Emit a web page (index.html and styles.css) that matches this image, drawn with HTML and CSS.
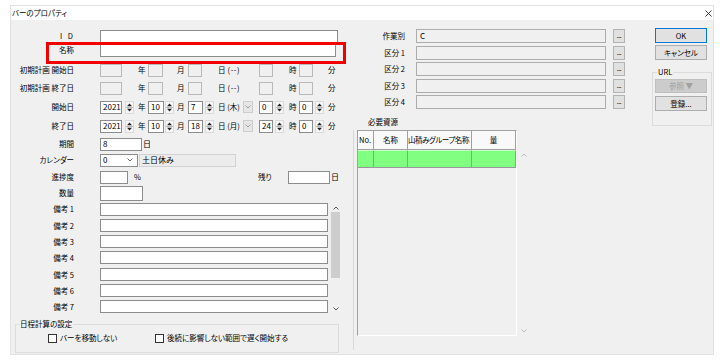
FILE: index.html
```html
<!DOCTYPE html>
<html lang="ja">
<head>
<meta charset="utf-8">
<title>バーのプロパティ</title>
<link rel="stylesheet" href="styles.css">
</head>
<body>
<div class="window">
  <div class="titlebar">
    <span class="title">バーのプロパティ</span>
    <svg class="close" width="7" height="7" viewBox="0 0 7 7"><path d="M0.5 0.5L6.5 6.5M6.5 0.5L0.5 6.5" stroke="#222" stroke-width="0.9"/></svg>
  </div>
  <div class="body">
    <div class="left">
      <div class="row"><span class="lbl idl">I D</span><span class="tb w238"></span></div>
      <div class="row hl"><span class="lbl">名称</span><span class="tb w236"></span></div>

      <div class="row g6"><span class="lbl">初期計画 開始日</span>
        <div class="dg">
          <span class="c c1"><span class="tb dis w22"></span></span>
          <span class="u u13 p3">年</span>
          <span class="c c3"><span class="tb dis w15"></span></span>
          <span class="u u13 p2">月</span>
          <span class="c c5"><span class="tb dis w14"></span></span>
          <span class="c c6">日 <span class="dash">(--)</span></span>
          <span class="c c7"><span class="tb dis w14"></span></span>
          <span class="u u12 p2">時</span>
          <span class="c c9"><span class="tb dis w14"></span></span>
          <span class="u p2">分</span>
        </div>
      </div>
      <div class="row g4"><span class="lbl">初期計画 終了日</span>
        <div class="dg">
          <span class="c c1"><span class="tb dis w22"></span></span>
          <span class="u u13 p3">年</span>
          <span class="c c3"><span class="tb dis w15"></span></span>
          <span class="u u13 p2">月</span>
          <span class="c c5"><span class="tb dis w14"></span></span>
          <span class="c c6">日 <span class="dash">(--)</span></span>
          <span class="c c7"><span class="tb dis w14"></span></span>
          <span class="u u12 p2">時</span>
          <span class="c c9"><span class="tb dis w14"></span></span>
          <span class="u p2">分</span>
        </div>
      </div>

      <div class="row g5"><span class="lbl">開始日</span>
        <div class="dg">
          <span class="c c1"><span class="tb w22">2021</span><svg class="spin ml3" width="9" height="13" viewBox="0 0 9 13"><path d="M2 5.2H7L4.5 2.4Z M2 7.8H7L4.5 10.6Z" fill="#222"/><path d="M1 6.5H8" stroke="#aaa" stroke-width="0.8"/></svg></span>
          <span class="u u13 p3">年</span>
          <span class="c c3"><span class="tb w16">10</span><svg class="spin ml1" width="9" height="13" viewBox="0 0 9 13"><path d="M2 5.2H7L4.5 2.4Z M2 7.8H7L4.5 10.6Z" fill="#222"/><path d="M1 6.5H8" stroke="#aaa" stroke-width="0.8"/></svg></span>
          <span class="u u13 p2">月</span>
          <span class="c c5"><span class="tb w15">7</span><svg class="spin ml2" width="9" height="13" viewBox="0 0 9 13"><path d="M2 5.2H7L4.5 2.4Z M2 7.8H7L4.5 10.6Z" fill="#222"/><path d="M1 6.5H8" stroke="#aaa" stroke-width="0.8"/></svg></span>
          <span class="c c6">日 (木)<span class="dd"><svg width="6" height="4" viewBox="0 0 6 4"><path d="M0.5 0.5L3 3L5.5 0.5" fill="none" stroke="#9a9a9a" stroke-width="0.9"/></svg></span></span>
          <span class="c c7"><span class="tb w14">0</span><svg class="spin ml2" width="9" height="13" viewBox="0 0 9 13"><path d="M2 5.2H7L4.5 2.4Z M2 7.8H7L4.5 10.6Z" fill="#222"/><path d="M1 6.5H8" stroke="#aaa" stroke-width="0.8"/></svg></span>
          <span class="u u12 p2">時</span>
          <span class="c c9"><span class="tb w14">0</span><svg class="spin ml2" width="9" height="13" viewBox="0 0 9 13"><path d="M2 5.2H7L4.5 2.4Z M2 7.8H7L4.5 10.6Z" fill="#222"/><path d="M1 6.5H8" stroke="#aaa" stroke-width="0.8"/></svg></span>
          <span class="u p2">分</span>
        </div>
      </div>
      <div class="row g5"><span class="lbl">終了日</span>
        <div class="dg">
          <span class="c c1"><span class="tb w22">2021</span><svg class="spin ml3" width="9" height="13" viewBox="0 0 9 13"><path d="M2 5.2H7L4.5 2.4Z M2 7.8H7L4.5 10.6Z" fill="#222"/><path d="M1 6.5H8" stroke="#aaa" stroke-width="0.8"/></svg></span>
          <span class="u u13 p3">年</span>
          <span class="c c3"><span class="tb w16">10</span><svg class="spin ml1" width="9" height="13" viewBox="0 0 9 13"><path d="M2 5.2H7L4.5 2.4Z M2 7.8H7L4.5 10.6Z" fill="#222"/><path d="M1 6.5H8" stroke="#aaa" stroke-width="0.8"/></svg></span>
          <span class="u u13 p2">月</span>
          <span class="c c5"><span class="tb w15">18</span><svg class="spin ml2" width="9" height="13" viewBox="0 0 9 13"><path d="M2 5.2H7L4.5 2.4Z M2 7.8H7L4.5 10.6Z" fill="#222"/><path d="M1 6.5H8" stroke="#aaa" stroke-width="0.8"/></svg></span>
          <span class="c c6">日 (月)<span class="dd"><svg width="6" height="4" viewBox="0 0 6 4"><path d="M0.5 0.5L3 3L5.5 0.5" fill="none" stroke="#9a9a9a" stroke-width="0.9"/></svg></span></span>
          <span class="c c7"><span class="tb w14">24</span><svg class="spin ml2" width="9" height="13" viewBox="0 0 9 13"><path d="M2 5.2H7L4.5 2.4Z M2 7.8H7L4.5 10.6Z" fill="#222"/><path d="M1 6.5H8" stroke="#aaa" stroke-width="0.8"/></svg></span>
          <span class="u u12 p2">時</span>
          <span class="c c9"><span class="tb w14">0</span><svg class="spin ml2" width="9" height="13" viewBox="0 0 9 13"><path d="M2 5.2H7L4.5 2.4Z M2 7.8H7L4.5 10.6Z" fill="#222"/><path d="M1 6.5H8" stroke="#aaa" stroke-width="0.8"/></svg></span>
          <span class="u p2">分</span>
        </div>
      </div>

      <div class="row g4"><span class="lbl">期間</span><span class="tb w42">8</span><span class="unit">日</span></div>
      <div class="row g2"><span class="lbl">カレンダー</span><span class="tb combo w38">0<svg width="6" height="4" viewBox="0 0 6 4"><path d="M0.5 0.5L3 3L5.5 0.5" fill="none" stroke="#555" stroke-width="0.9"/></svg></span><span class="cal">土日休み</span></div>
      <div class="row g3"><span class="lbl">進捗度</span><span class="tb w28"></span><span class="pct">%</span><span class="rem">残り</span><span class="tb w42"></span><span class="unit">日</span></div>
      <div class="row g2"><span class="lbl">数量</span><span class="tb w43 h15"></span></div>

      <div class="memo">
        <div class="memo-rows">
          <div class="row"><span class="lbl">備考 1</span><span class="tb w228"></span></div>
          <div class="row"><span class="lbl">備考 2</span><span class="tb w228"></span></div>
          <div class="row"><span class="lbl">備考 3</span><span class="tb w228"></span></div>
          <div class="row"><span class="lbl">備考 4</span><span class="tb w228"></span></div>
          <div class="row"><span class="lbl">備考 5</span><span class="tb w228"></span></div>
          <div class="row"><span class="lbl">備考 6</span><span class="tb w228"></span></div>
          <div class="row"><span class="lbl">備考 7</span><span class="tb w228"></span></div>
        </div>
        <div class="vs">
          <div class="vs-up"><svg width="6" height="4" viewBox="0 0 6 4"><path d="M0.5 3.5L3 1L5.5 3.5" fill="none" stroke="#444" stroke-width="0.9"/></svg></div>
          <div class="thumb"></div>
          <div class="vs-fill"></div>
          <div class="vs-down"><svg width="6" height="4" viewBox="0 0 6 4"><path d="M0.5 0.5L3 3L5.5 0.5" fill="none" stroke="#444" stroke-width="0.9"/></svg></div>
        </div>
      </div>

      <fieldset class="grp">
        <legend>日程計算の設定</legend>
        <div class="cbrow">
          <label class="cbi first"><span class="cb"></span>バーを移動しない</label>
          <label class="cbi"><span class="cb"></span>後続に影響しない範囲で遅く開始する</label>
        </div>
      </fieldset>
    </div>

    <div class="mid">
      <div class="mrows">
        <div class="mrow"><span class="mlbl">作業別</span><span class="mtb">C</span><span class="dots">...</span></div>
        <div class="mrow"><span class="mlbl">区分 1</span><span class="mtb"></span><span class="dots">...</span></div>
        <div class="mrow"><span class="mlbl">区分 2</span><span class="mtb"></span><span class="dots">...</span></div>
        <div class="mrow"><span class="mlbl">区分 3</span><span class="mtb"></span><span class="dots">...</span></div>
        <div class="mrow"><span class="mlbl">区分 4</span><span class="mtb"></span><span class="dots">...</span></div>
      </div>
      <div class="sect">必要資源</div>
      <div class="gridwrap">
        <div class="grid">
          <div class="gh gl">No.</div>
          <div class="gh">名称</div>
          <div class="gh gl tight">山積みグループ名称</div>
          <div class="gh">量</div>
          <div class="gd"></div>
          <div class="gd"></div>
          <div class="gd"></div>
          <div class="gd"></div>
        </div>
        <div class="gscroll">
          <svg width="6" height="4" viewBox="0 0 6 4"><path d="M0.5 3.5L3 1L5.5 3.5" fill="none" stroke="#b4b4b4" stroke-width="0.9"/></svg>
          <svg width="6" height="4" viewBox="0 0 6 4"><path d="M0.5 0.5L3 3L5.5 0.5" fill="none" stroke="#b4b4b4" stroke-width="0.9"/></svg>
        </div>
      </div>
    </div>

    <div class="btns">
      <div class="btn ok">OK</div>
      <div class="btn cancel">キャンセル</div>
      <fieldset class="url">
        <legend>URL</legend>
        <div class="btn inner ref">参照 ▼</div>
        <div class="btn inner reg">登録...</div>
      </fieldset>
    </div>
  </div>
</div>
</body>
</html>
```

FILE: styles.css
```css
* { box-sizing: border-box; }
html, body { margin: 0; padding: 0; }
body {
  width: 726px;
  height: 362px;
  overflow: hidden;
  background: #fff;
  color: #000;
  font-family: "Noto Sans CJK JP", "Noto Sans", sans-serif;
  font-size: 7.5px;
  line-height: 1;
  font-feature-settings: "palt";
}

.window {
  margin: 5px 0 0 10px;
  width: 704px;
  height: 350px;
  border: 1px solid #e2e2e2;
  display: flex;
  flex-direction: column;
}
.titlebar {
  flex: none;
  height: 14px;
  background: #fff;
  display: flex;
  align-items: center;
  justify-content: space-between;
  padding: 0 1px 0 1px;
}
.title { font-size: 7.5px; }
.close { display: block; }

.body {
  flex: 1;
  background: #f0f0f0;
  display: flex;
}

/* ---------- left column ---------- */
.left {
  flex: none;
  width: 342px;
  padding-top: 9px;
  display: flex;
  flex-direction: column;
}
.row {
  flex: none;
  display: flex;
  align-items: center;
  height: 14px;
}
.g2 { margin-top: 2px; }
.g3 { margin-top: 3px; }
.g4 { margin-top: 4px; }
.g5 { margin-top: 5px; }
.g6 { margin-top: 6px; }

.lbl {
  flex: none;
  width: 63px;
  margin-right: 26px;
  text-align: right;
  white-space: nowrap;
}
.idl { word-spacing: 4px; padding-right: 1px; }
.tb {
  flex: none;
  display: flex;
  align-items: center;
  height: 13px;
  background: #fff;
  border: 1px solid #8c8c8c;
  padding-left: 2px;
  font-size: 8px;
  white-space: nowrap;
}
.tb.dis { background: #f0f0f0; border-color: #b9b9b9; }
.h15 { height: 15px; }
.w14 { width: 14px; }
.w15 { width: 15px; }
.w16 { width: 16px; }
.w22 { width: 22px; }
.w28 { width: 28px; }
.w38 { width: 38px; }
.w42 { width: 42px; }
.w43 { width: 43px; }
.w228 { width: 228px; }
.w236 { width: 236px; }
.w238 { width: 238px; }

.hl { position: relative; }
.hl::after {
  content: "";
  position: absolute;
  left: 35px;
  top: -1px;
  width: 294px;
  height: 16px;
  border: 3px solid #f20000;
  pointer-events: none;
}

.dg { display: flex; align-items: center; height: 14px; }
.c { flex: none; display: flex; align-items: center; height: 14px; white-space: nowrap; }
.c1 { width: 35px; }
.c3 { width: 27px; }
.c5 { width: 28px; }
.c6 { width: 43px; padding-left: 2px; }
.c7 { width: 28px; }
.c9 { width: 27px; }
.dash { margin-left: 2px; letter-spacing: 0.6px; font-feature-settings: normal; }
.u { flex: none; white-space: nowrap; }
.u13 { width: 13px; }
.u12 { width: 12px; }
.p2 { padding-left: 2px; }
.p3 { padding-left: 3px; }

.spin {
  flex: none;
  display: block;
  background: #f5f5f5;
  outline: 1px solid #dadada;
  outline-offset: -1px;
}
.ml1 { margin-left: 1px; }
.ml2 { margin-left: 2px; }
.ml3 { margin-left: 3px; }

.dd {
  margin-left: auto;
  margin-right: 6px;
  width: 10px;
  height: 12px;
  background: #e6e6e6;
  border: 1px solid #cdcdcd;
  display: flex;
  align-items: center;
  justify-content: center;
}
.dd svg { display: block; }

.unit { margin-left: 1px; font-size: 8px; }
.combo { justify-content: space-between; padding-right: 4px; }
.combo svg { display: block; }
.cal {
  flex: none;
  margin-left: 1px;
  width: 97px;
  height: 13px;
  border: 1px solid #d2d2d2;
  background: #ececec;
  padding-left: 2px;
  display: flex;
  align-items: center;
  font-size: 8px;
}
.pct { flex: none; width: 124px; margin-left: 6px; }
.rem { flex: none; width: 30px; }

.memo { display: flex; margin-top: 2px; flex: none; }
.memo-rows {
  width: 317px;
  display: flex;
  flex-direction: column;
  row-gap: 2.33px;
}
.vs {
  width: 9px;
  margin-left: 3px;
  height: 112px;
  display: flex;
  flex-direction: column;
  align-items: center;
}
.vs-up { height: 10px; display: flex; align-items: center; padding-top: 1px; }
.vs-up svg, .vs-down svg { display: block; }
.thumb { width: 9px; height: 66px; background: #cdcdcd; }
.vs-fill { flex: 1; }
.vs-down { height: 10px; display: flex; align-items: center; }

.grp {
  margin: 5px 0 0 4px;
  width: 324px;
  height: 34px;
  border: 1px solid #dcdcdc;
  padding: 0 0 0 3px;
  min-width: 0;
}
.grp legend, .url legend {
  padding: 0 1px;
  line-height: 10px;
  font-size: 7.5px;
}
.cbrow { display: flex; align-items: center; margin: 4px 0 0 29px; height: 10px; }
.cbi { display: flex; align-items: center; white-space: nowrap; }
.cbi.first { width: 107px; }
.cb {
  width: 9px;
  height: 9px;
  border: 1px solid #333;
  background: #fff;
  margin-right: 3px;
}

/* ---------- middle column ---------- */
.mid {
  flex: none;
  width: 292px;
  padding-top: 9px;
  display: flex;
  flex-direction: column;
}
.mrows { display: flex; flex-direction: column; row-gap: 2.5px; }
.mrow { display: flex; align-items: center; height: 14px; }
.mlbl { width: 52px; margin-right: 11px; text-align: right; white-space: nowrap; }
.mtb {
  width: 190px;
  height: 14px;
  background: #f0f0f0;
  border: 1px solid #acacac;
  padding-left: 3px;
  display: flex;
  align-items: center;
  font-size: 8px;
}
.dots {
  margin-left: 7px;
  width: 12px;
  height: 14px;
  background: #e1e1e1;
  border: 1px solid #b3b3b3;
  display: flex;
  align-items: flex-end;
  justify-content: center;
  padding-bottom: 3px;
  font-size: 7px;
  letter-spacing: -0.5px;
}
.sect { margin: 8px 0 0 15px; line-height: 10px; }
.gridwrap {
  margin-top: 3px;
  height: 220px;
  border-left: 1px solid #d8d8d8;
  display: flex;
}
.grid {
  margin-left: 3px;
  width: 160px;
  height: 206px;
  border-top: 1px solid #a0a0a0;
  border-left: 1px solid #a0a0a0;
  border-right: 1px solid #fff;
  border-bottom: 1px solid #fff;
  display: grid;
  grid-template-columns: 16px 34px 64px 44px;
  grid-template-rows: 19px 18px;
  align-content: start;
}
.gh {
  background: #f9f9f9;
  border-right: 1px solid #a0a0a0;
  border-bottom: 1px solid #a0a0a0;
  display: flex;
  align-items: center;
  justify-content: center;
  white-space: nowrap;
  overflow: hidden;
}
.gh.gl { justify-content: flex-start; padding-left: 1px; }
.gh.tight { letter-spacing: -0.45px; padding-left: 0; }
.gd {
  background: #80ff80;
  border-right: 1px solid #9a9a9a;
  border-bottom: 1px solid #9a9a9a;
  border-top: 1px solid #c8ffc8;
}
.gscroll {
  width: 12px;
  height: 206px;
  display: flex;
  flex-direction: column;
  justify-content: space-between;
  align-items: center;
  padding: 23px 0 3px 1px;
}
.gscroll svg { display: block; }

/* ---------- buttons ---------- */
.btns {
  flex: none;
  width: 68px;
  padding-top: 8px;
  display: flex;
  flex-direction: column;
}
.btn {
  flex: none;
  margin-left: 10px;
  width: 52px;
  height: 15px;
  background: #e1e1e1;
  border: 1px solid #adadad;
  display: flex;
  align-items: center;
  justify-content: center;
  white-space: nowrap;
}
.ok { border-color: #0078d7; }
.cancel { margin-top: 2px; }
.url {
  margin: 7px 0 0 7px;
  width: 60px;
  height: 59px;
  border: 1px solid #dcdcdc;
  padding: 0 0 0 2px;
  min-width: 0;
}
.url legend { margin-left: 2px; }
.btn.inner { margin-left: 0; }
.ref {
  margin-top: 2px;
  height: 14px;
  background: #cccccc;
  border-color: #bfbfbf;
  color: #a0a0a0;
}
.reg { margin-top: 3px; }
```
